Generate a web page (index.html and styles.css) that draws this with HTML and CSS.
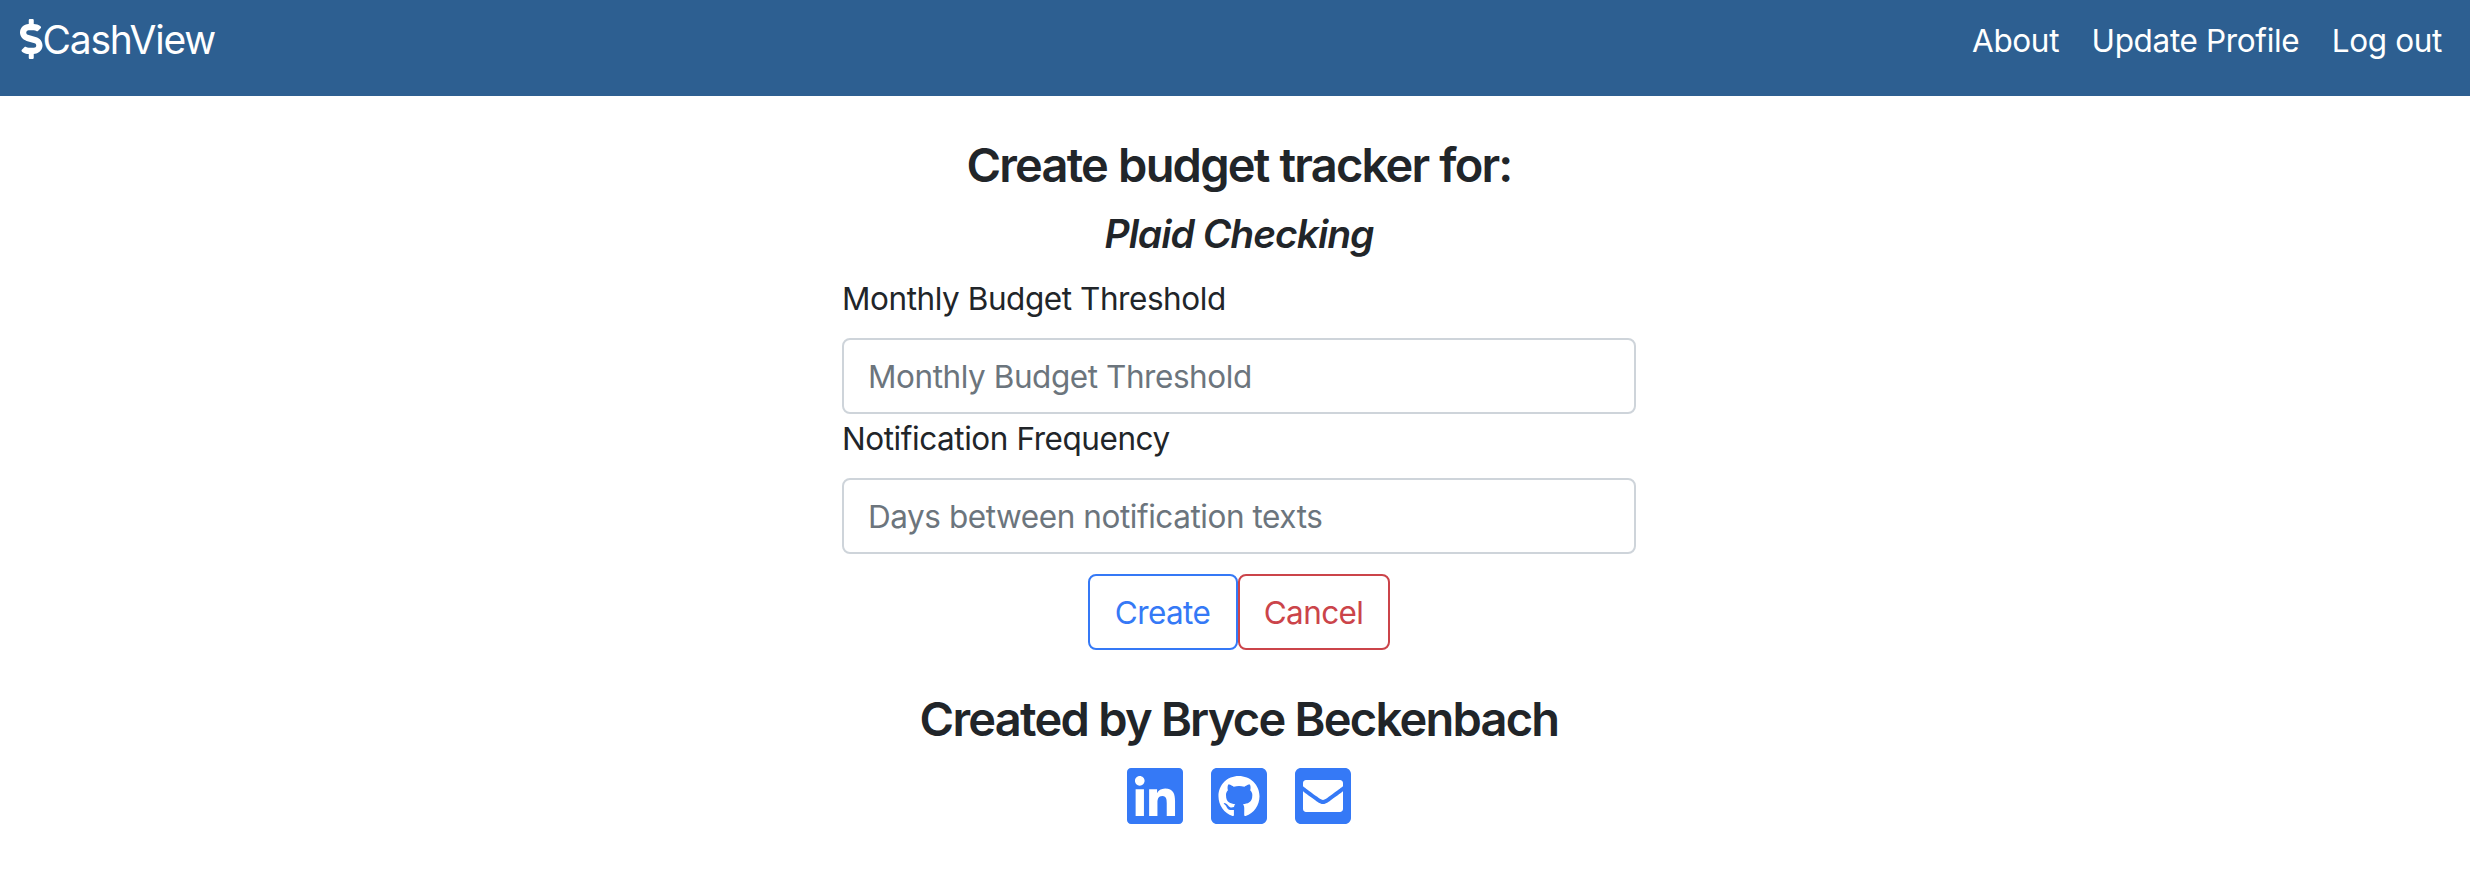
FILE: index.html
```html
<!DOCTYPE html>
<html lang="en">
<head>
<meta charset="utf-8">
<title>CashView</title>
<link rel="stylesheet" href="styles.css">
</head>
<body>
<nav class="navbar">
  <a class="brand"><svg class="dollar" viewBox="0 0 288 512"><path d="M209.2 233.4l-108-31.6C88.7 198.2 80 186.5 80 173.5c0-16.3 13.2-29.5 29.5-29.5h66.3c12.2 0 24.2 3.7 34.2 10.5 6.1 4.1 14.3 3.1 19.5-2l34.8-34c7.1-6.9 6.1-18.4-1.8-24.5C238 74.8 207.4 64.1 176 64V16c0-8.8-7.2-16-16-16h-32c-8.8 0-16 7.2-16 16v48h-2.5C45.8 64-5.4 118.7.5 183.6c4.2 46.1 39.4 83.6 83.8 96.6l102.5 30c12.5 3.7 21.2 15.3 21.2 28.3 0 16.3-13.2 29.5-29.5 29.5h-66.3C100 368 88 364.3 78 357.5c-6.1-4.1-14.3-3.1-19.5 2l-34.8 34c-7.1 6.9-6.1 18.4 1.8 24.5 24.5 19.2 55.1 29.9 86.5 30v48c0 8.8 7.2 16 16 16h32c8.8 0 16-7.2 16-16v-48.2c46.6-.9 90.3-28.6 105.7-72.7 21.5-61.6-14.6-124.8-72.5-141.7z"/></svg><span class="brand-name">CashView</span></a>
  <div class="links">
    <a class="link about">About</a>
    <a class="link profile">Update Profile</a>
    <a class="link logout">Log out</a>
  </div>
</nav>
<main class="content">
  <h1 class="title">Create budget tracker for:</h1>
  <h2 class="account">Plaid Checking</h2>
  <form class="form">
    <label class="label" for="threshold">Monthly Budget Threshold</label>
    <input class="input" id="threshold" type="text" placeholder="Monthly Budget Threshold">
    <label class="label frequency" for="frequency">Notification Frequency</label>
    <input class="input days" id="frequency" type="text" placeholder="Days between notification texts">
    <div class="actions">
      <button class="btn create" type="button">Create</button>
      <button class="btn cancel" type="button">Cancel</button>
    </div>
  </form>
</main>
<footer class="footer">
  <h1 class="credit">Created by Bryce Beckenbach</h1>
  <div class="social">
    <svg class="icon" viewBox="0 32 448 448"><path d="M416 32H31.9C14.3 32 0 46.5 0 64.3v383.4C0 465.5 14.3 480 31.9 480H416c17.6 0 32-14.5 32-32.3V64.3c0-17.8-14.4-32.3-32-32.3zM135.4 416H69V202.2h66.5V416zm-33.2-243c-21.3 0-38.5-17.3-38.5-38.5S80.9 96 102.2 96c21.2 0 38.5 17.3 38.5 38.5 0 21.3-17.2 38.5-38.5 38.5zm282.1 243h-66.4V312c0-24.8-.5-56.7-34.5-56.7-34.6 0-39.9 27-39.9 54.9V416h-66.4V202.2h63.7v29.2h.9c8.9-16.8 30.6-34.5 62.9-34.5 67.2 0 79.7 44.3 79.7 101.9V416z"/></svg>
    <svg class="icon" viewBox="0 32 448 448"><path d="M400 32H48C21.5 32 0 53.5 0 80v352c0 26.5 21.5 48 48 48h352c26.5 0 48-21.5 48-48V80c0-26.5-21.5-48-48-48zM277.3 415.7c-8.4 1.5-11.5-3.7-11.5-8 0-5.4.2-33 .2-55.3 0-15.6-5.2-25.5-11.3-30.7 37-4.1 76-9.2 76-73.1 0-18.2-6.5-27.3-17.1-39 1.7-4.3 7.4-22-1.7-45-13.9-4.3-45.7 17.9-45.7 17.9-13.2-3.7-27.5-5.6-41.6-5.6-14.1 0-28.4 1.9-41.6 5.6 0 0-31.8-22.2-45.7-17.9-9.1 22.9-3.5 40.6-1.7 45-10.6 11.7-15.6 20.8-15.6 39 0 63.6 37.3 69 74.3 73.1-4.8 4.3-9.1 11.7-10.6 22.3-9.5 4.3-33.8 11.7-48.3-13.9-9.1-15.8-25.5-17.1-25.5-17.1-16.2-.2-1.1 10.2-1.1 10.2 10.8 5 18.4 24.2 18.4 24.2 9.7 29.7 56.1 19.7 56.1 19.7 0 13.9.2 36.5.2 40.6 0 4.3-3 9.5-11.5 8-66-22.1-112.2-84.9-112.2-158.3 0-91.8 70.2-161.5 162-161.5S388 165.6 388 257.4c.1 73.4-44.7 136.3-110.7 158.3z"/></svg>
    <svg class="icon" viewBox="0 32 448 448"><path d="M400 32H48C21.49 32 0 53.49 0 80v352c0 26.51 21.49 48 48 48h352c26.51 0 48-21.49 48-48V80c0-26.51-21.49-48-48-48zM178.117 262.104C87.429 196.287 88.353 196.121 64 177.167V152c0-13.255 10.745-24 24-24h272c13.255 0 24 10.745 24 24v25.167c-24.371 18.969-23.434 19.124-114.117 84.938-10.5 7.655-31.392 26.12-45.883 25.894-14.503.218-35.367-18.227-45.883-25.895zM384 217.775V360c0 13.255-10.745 24-24 24H88c-13.255 0-24-10.745-24-24V217.775c13.958 10.794 33.329 25.236 95.303 70.214 14.162 10.341 37.975 32.145 64.697 32.01 26.887.134 51.036-22.041 64.72-32.025 61.958-44.964 81.325-59.406 95.28-70.199z"/></svg>
  </div>
</footer>
</body>
</html>
```
FILE: styles.css
```css
* { box-sizing: border-box; }
body {
  margin: 0;
  background: #fff;
  color: #212529;
  font: 400 31.5px/48px Inter, "Liberation Sans", sans-serif;
  letter-spacing: -0.44px;
}
h1, h2 { margin: 0; font-weight: 600; white-space: nowrap; }
.navbar {
  display: flex;
  justify-content: space-between;
  align-items: flex-start;
  height: 96px;
  padding: 9px 28px 0 20px;
  background: #2d5f91;
  color: #fff;
}
.brand { display: flex; align-items: flex-start; }
.dollar { width: 22.5px; height: 40px; margin-top: 10px; fill: currentColor; }
.brand-name { padding-top: 1px; font-size: 39px; line-height: 60px; letter-spacing: -1.25px; }
.links { display: flex; gap: 32.5px; padding-top: 8px; letter-spacing: -0.35px; }
.link { white-space: nowrap; }
.content { width: 794px; margin: 40px 0 0 842px; }
.title { font-size: 47px; line-height: 58px; letter-spacing: -1.8px; word-spacing: 1px; text-align: center; }
.account { margin-top: 16px; font-size: 39px; line-height: 48px; letter-spacing: -1px; font-style: italic; text-align: center; }
.form { display: flex; flex-direction: column; margin-top: 16px; }
.label { height: 64px; padding-top: 1px; }
.input {
  width: 100%;
  height: 76px;
  padding: 12px 24px;
  border: 2px solid #ced4da;
  border-radius: 8px;
  background: #fff;
  font: inherit;
  letter-spacing: inherit;
}
.input::placeholder { color: #6c757d; opacity: 1; }
.actions { display: flex; justify-content: center; margin-top: 20px; }
.btn {
  width: 150px;
  height: 76px;
  padding: 2px 1px 0 0;
  border: 2px solid;
  border-radius: 8px;
  background: transparent;
  font: inherit;
  letter-spacing: -0.6px;
}
.create { color: #3579f6; }
.cancel { width: 152px; color: #cb444a; }
.footer { width: 794px; margin: 40px 0 0 842px; }
.credit { font-size: 47px; line-height: 58px; letter-spacing: -1.75px; text-align: center; }
.social { display: flex; justify-content: center; gap: 28.4px; margin-top: 20px; }
.icon { width: 56px; height: 56px; fill: #3579f6; }
```
